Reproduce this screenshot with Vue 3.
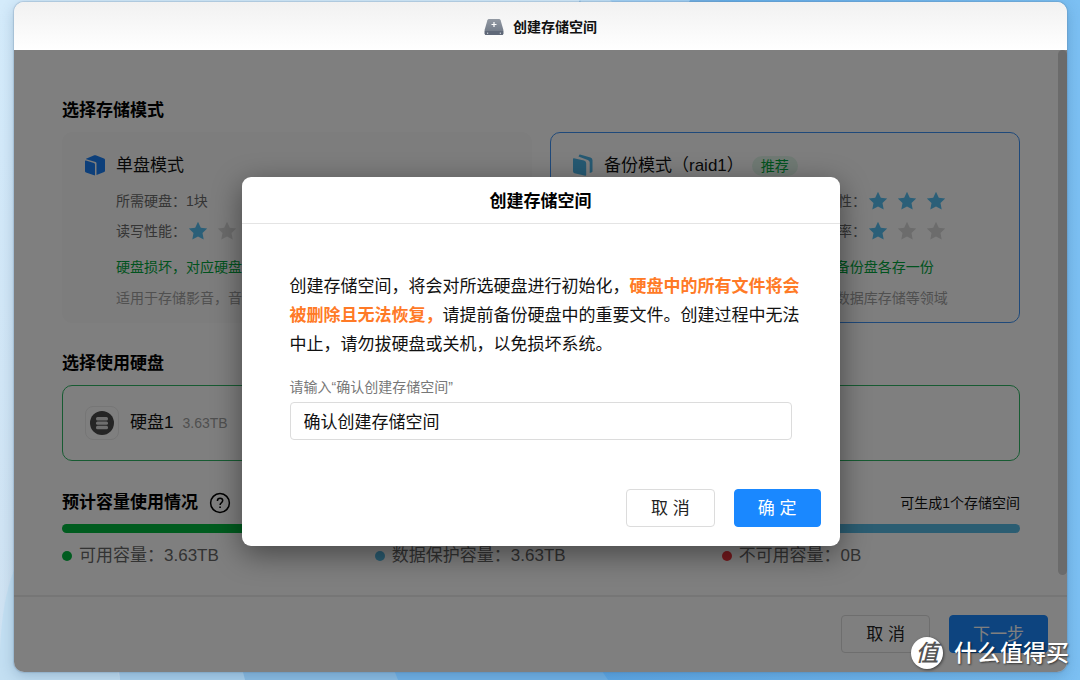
<script setup>
import { ref } from 'vue'

const confirmText = ref('确认创建存储空间')

const modes = [
  {
    id: 'single',
    name: '单盘模式',
    icon: 'box',
    recommended: false,
    selected: false,
    disks: '1块',
    speed: 1,
    safety: 1,
    usage: 3,
    note: '硬盘损坏，对应硬盘数据丢失',
    scope: '适用于存储影音，音乐等文件',
  },
  {
    id: 'backup',
    name: '备份模式（raid1）',
    icon: 'pages',
    recommended: true,
    selected: true,
    disks: '2块',
    speed: 2,
    safety: 3,
    usage: 1,
    note: '硬盘损坏时数据仍可恢复，主盘与1块备份盘各存一份',
    scope: '适用于重要文件备份, 办公文档资料及数据库存储等领域',
  },
]

const legend = [
  { label: '可用容量', value: '3.63TB', tone: 'green' },
  { label: '数据保护容量', value: '3.63TB', tone: 'blue' },
  { label: '不可用容量', value: '0B', tone: 'red' },
]

const starPath =
  'M10 .8l2.8 6 6.4.8-4.7 4.5 1.2 6.5L10 15.4l-5.7 3.2 1.2-6.5L.8 7.6l6.4-.8z'
</script>

<template>
  <div class="desktop">
    <svg class="wallpaper" viewBox="0 0 1080 680" preserveAspectRatio="none" aria-hidden="true">
      <defs>
        <linearGradient id="sky" x1="0" y1="0" x2="0" y2="1">
          <stop offset="0" stop-color="#d4ebfb" />
          <stop offset="1" stop-color="#cfe2f2" />
        </linearGradient>
        <linearGradient id="deep" x1="0" y1="0" x2="1" y2="0">
          <stop offset="0" stop-color="#5ea8e6" />
          <stop offset="1" stop-color="#7cc0f3" />
        </linearGradient>
      </defs>
      <rect width="1080" height="680" fill="url(#sky)" />
      <path d="M14 570Q2 600 0 650V680H120L60 500z" fill="#c3dff2" />
      <path d="M118 660L120 680H400V600z" fill="#aad0ec" />
      <path d="M580 0H1080V680H245L240 660z" fill="#8cbde3" />
      <path d="M580 0H620L590 30z" fill="#c3e2f8" />
      <path d="M610 0H700L640 30z" fill="#a4d2f6" />
      <path d="M690 0H1080V680H398L390 660z" fill="#72b2e6" />
      <path d="M720 0H1080V680H608L598 665z" fill="url(#deep)" />
    </svg>

    <main class="window">
      <header class="titlebar">
        <svg class="drive-icon" viewBox="0 0 20 18" aria-hidden="true">
          <defs>
            <linearGradient id="drive" x1="0" y1="0" x2="0" y2="1">
              <stop offset="0" stop-color="#9299a3" />
              <stop offset="1" stop-color="#6b7482" />
            </linearGradient>
          </defs>
          <path d="M5 1h10q1.200 0 1.600 1.200L19.400 12v3.500q0 1.500-1.500 1.500H2.100Q.6 17 .6 15.500V12L3.400 2.200Q3.800 1 5 1z" fill="url(#drive)" />
          <path d="M.8 13h18.400v2.500q0 1.500-1.500 1.500H2.300Q.8 17 .8 15.500z" fill="#5f6878" />
          <path d="M10 4v5M7.500 6.500h5" stroke="#fff" stroke-width="1.200" />
          <path d="M3 15.200h1.200M15.800 15.200H17" stroke="#e8ecf0" />
        </svg>
        <h1>创建存储空间</h1>
      </header>

      <div class="stage">
        <div class="content">
          <section>
            <h2>选择存储模式</h2>
            <div class="modes">
              <article v-for="m in modes" :key="m.id" class="mode" :class="{ selected: m.selected }">
                <svg v-if="m.icon === 'box'" class="mode-icon" viewBox="0 0 22 22" aria-hidden="true">
                  <path d="M2 4.800L10.300 1.300q.7-.3 1.400 0L20 4.600q1 .4 1 1.500v10.600q0 .9-.8 1.300L12.500 21V9.500q0-1-.9-1.400L2.200 5.200z" fill="#1a7ff5" />
                  <path d="M1 7.200q0-.9.9-.6l8 2.500q1.100.4 1.100 1.500v10.100q0 .9-.9.6L2 18.600q-1-.4-1-1.400z" fill="#1a7ff5" />
                </svg>
                <svg v-else class="mode-icon" viewBox="0 0 22 22" aria-hidden="true">
                  <path d="M1 5q0-1 .9-.8L12 6.500q2.200.5 2.200 2.700V21q0 1-.9.8L2.500 19.200Q1 18.800 1 17.300z" fill="#4db4e6" />
                  <path d="M6.500 2.600l.7-1.700q.2-.5.800-.3l10.500 2.900q2 .6 2 2.700v11q0 .7-.6 1l-2.200.8V8.600q0-2.200-2-2.700z" fill="#4db4e6" />
                </svg>

                <div class="mode-info">
                  <div class="mode-title">
                    <h3>{{ m.name }}</h3>
                    <span v-if="m.recommended" class="tag">推荐</span>
                  </div>
                  <dl class="facts">
                    <div>
                      <dt>所需硬盘：</dt>
                      <dd>{{ m.disks }}</dd>
                    </div>
                    <div>
                      <dt>安全性：</dt>
                      <dd class="stars">
                        <svg v-for="n in 3" :key="n" viewBox="0 0 20 20" :class="{ on: n <= m.safety }"><path :d="starPath" /></svg>
                      </dd>
                    </div>
                    <div>
                      <dt>读写性能：</dt>
                      <dd class="stars">
                        <svg v-for="n in 3" :key="n" viewBox="0 0 20 20" :class="{ on: n <= m.speed }"><path :d="starPath" /></svg>
                      </dd>
                    </div>
                    <div>
                      <dt>利用率：</dt>
                      <dd class="stars">
                        <svg v-for="n in 3" :key="n" viewBox="0 0 20 20" :class="{ on: n <= m.usage }"><path :d="starPath" /></svg>
                      </dd>
                    </div>
                  </dl>
                  <p class="note">{{ m.note }}</p>
                  <p class="scope">{{ m.scope }}</p>
                </div>
              </article>
            </div>
          </section>

          <section>
            <h2>选择使用硬盘</h2>
            <div class="disk">
              <span class="disk-icon">
                <svg viewBox="0 0 24 24" aria-hidden="true">
                  <circle cx="12" cy="12" r="12" fill="#4a4a4a" />
                  <g fill="#dcdcdc">
                    <rect x="6" y="6" width="12" height="3.400" rx="1.500" />
                    <rect x="6" y="10.400" width="12" height="3.400" rx="1.500" />
                    <rect x="6" y="14.800" width="12" height="3.400" rx="1.500" />
                  </g>
                </svg>
              </span>
              <span class="disk-name">硬盘1</span>
              <span class="disk-size">3.63TB</span>
            </div>
          </section>

          <section>
            <div class="usage-head">
              <h2>预计容量使用情况</h2>
              <button class="help" type="button" aria-label="帮助">
                <svg viewBox="0 0 22 22" aria-hidden="true" fill="none" stroke="#000">
                  <circle cx="11" cy="11" r="9.400" stroke-width="1.500" />
                  <path d="M8.400 9q0-2.700 2.700-2.700 2.600 0 2.600 2.300 0 1.300-1.400 2.200-1.200.8-1.200 2.200" stroke-width="1.500" />
                  <path d="M11.100 14.400v1.600" stroke-width="1.600" />
                </svg>
              </button>
              <span class="count">可生成1个存储空间</span>
            </div>
            <div class="meter"><span class="green"></span><span class="blue"></span></div>
            <ul class="legend">
              <li v-for="l in legend" :key="l.label">
                <i :class="l.tone"></i>{{ l.label }}：{{ l.value }}
              </li>
            </ul>
          </section>
          <span class="scroll-thumb"></span>
        </div>

        <footer class="actions page-actions">
          <button class="btn" type="button">取 消</button>
          <button class="btn primary" type="button">下一步</button>
        </footer>

        <div class="mask">
          <form class="dialog" role="dialog" aria-labelledby="dialog-title" @submit.prevent>
            <h2 id="dialog-title">创建存储空间</h2>
            <div class="dialog-body">
              <p>创建存储空间，将会对所选硬盘进行初始化，<strong>硬盘中的所有文件将会被删除且无法恢复，</strong>请提前备份硬盘中的重要文件。创建过程中无法中止，请勿拔硬盘或关机，以免损坏系统。</p>
              <label for="confirm">请输入“确认创建存储空间”</label>
              <input id="confirm" v-model="confirmText" type="text" autocomplete="off" />
            </div>
            <div class="actions">
              <button class="btn" type="button">取 消</button>
              <button class="btn primary" type="submit">确 定</button>
            </div>
          </form>
        </div>
      </div>
    </main>

    <div class="watermark">
      <span class="seal">值</span>
      <span>什么值得买</span>
    </div>
  </div>
</template>

<style>
body {
  margin: 0;
}
</style>

<style scoped>
* {
  box-sizing: border-box;
}

.desktop {
  position: relative;
  display: flex;
  min-height: 100vh;
  padding: 2px 13px 8px 14px;
  overflow: hidden;
  font-family: "Liberation Sans", "Noto Sans CJK SC", sans-serif;
  font-size: 17px;
  line-height: 24px;
  color: #111;
}

.wallpaper {
  position: absolute;
  inset: 0;
  width: 100%;
  height: 100%;
}

h1,
h2,
h3,
p,
dl,
dd,
ul {
  margin: 0;
  padding: 0;
}

.window {
  position: relative;
  flex: 1;
  display: flex;
  flex-direction: column;
  border-radius: 10px;
  overflow: hidden;
  background: #fff;
  box-shadow: 0 0 1px 1px rgba(90, 120, 150, 0.25), 0 4px 14px rgba(30, 70, 110, 0.25);
}

.titlebar {
  display: flex;
  align-items: center;
  justify-content: center;
  gap: 9px;
  height: 48px;
  padding-top: 2px;
  background: linear-gradient(#f1f1f1, #fff);
}

.titlebar h1 {
  font-size: 14px;
  line-height: 20px;
}

.drive-icon {
  width: 20px;
  height: 18px;
}

.stage {
  position: relative;
  flex: 1;
  display: flex;
  flex-direction: column;
}

.content {
  position: relative;
  flex: 1;
  padding: 49px 47px 24px 48px;
}

.scroll-thumb {
  position: absolute;
  top: 0;
  right: 0;
  bottom: 20px;
  width: 9px;
  border-radius: 5px;
  background: #d6d6d6;
}

h2 {
  font-size: 17px;
  line-height: 24px;
  color: #000;
}

.modes {
  display: grid;
  grid-template-columns: 1fr 1fr;
  gap: 18px;
  margin: 9px 0 29px;
}

.mode {
  display: flex;
  gap: 10px;
  min-width: 0;
  padding: 21px 20px 14px 21px;
  border: 1px solid #fafafa;
  border-radius: 10px;
  background: #fafafa;
}

.mode.selected {
  border-color: #3f93f5;
  background: #fdfdfd;
}

.mode-icon {
  flex: none;
  width: 22px;
  height: 22px;
}

.mode-info {
  min-width: 0;
  white-space: nowrap;
}

.mode-title {
  display: flex;
  align-items: center;
  gap: 8px;
}

h3 {
  font-size: 17px;
  font-weight: 400;
}

.tag {
  padding: 0 9px;
  border-radius: 10px;
  background: #e0f5e8;
  color: #00a63c;
  font-size: 14px;
  line-height: 20px;
}

.facts {
  display: grid;
  grid-template-columns: 206px 1fr;
  row-gap: 10px;
  margin-top: 13px;
  font-size: 14px;
  line-height: 20px;
  color: #6a6a6a;
}

.facts > div {
  display: flex;
  align-items: center;
}

.stars {
  display: flex;
  gap: 9px;
  margin-left: 2px;
}

.stars svg {
  width: 20px;
  height: 20px;
  fill: #d8d8d8;
}

.stars svg.on {
  fill: #56bff0;
}

.note,
.scope {
  font-size: 14px;
  line-height: 20px;
}

.note {
  margin-top: 16px;
  color: #00a63c;
}

.scope {
  margin-top: 11px;
  color: #a0a0a0;
}

.disk {
  display: flex;
  align-items: center;
  margin: 9px 0 30px;
  padding: 20px 22px;
  border: 1px solid #2fb765;
  border-radius: 10px;
}

.disk-icon {
  display: flex;
  align-items: center;
  justify-content: center;
  width: 34px;
  height: 34px;
  border: 1px solid #ececec;
  border-radius: 8px;
}

.disk-icon svg {
  width: 24px;
  height: 24px;
}

.disk-name {
  margin: 0 9px 0 11px;
}

.disk-size {
  font-size: 14px;
  color: #a0a0a0;
}

.usage-head {
  display: flex;
  align-items: center;
  gap: 11px;
}

.help {
  width: 22px;
  height: 22px;
  padding: 0;
  border: 0;
  background: none;
}

.help svg {
  display: block;
}

.count {
  margin-left: auto;
  font-size: 14px;
}

.meter {
  display: flex;
  height: 9px;
  margin: 9px 0 11px;
  border-radius: 5px;
  overflow: hidden;
}

.meter span {
  flex: 1;
}

.green {
  background: #00b83f;
}

.blue {
  background: #56bae5;
}

.red {
  background: #f0343c;
}

.legend {
  display: flex;
  gap: 156px;
  list-style: none;
  white-space: nowrap;
  color: #666;
}

.legend li {
  display: flex;
  align-items: center;
}

.legend i {
  width: 10px;
  height: 10px;
  margin-right: 7px;
  border-radius: 50%;
}

.actions {
  display: flex;
  justify-content: flex-end;
  gap: 19px;
  padding: 0 19px 19px;
}

.page-actions {
  padding-top: 18px;
  border-top: 2px solid #ececec;
}

.btn {
  height: 38px;
  padding: 2px 24px 0;
  border: 1px solid #dcdcdc;
  border-radius: 4px;
  background: #fff;
  color: #222;
  font: inherit;
}

.btn.primary {
  padding: 2px 23px 0;
  border-color: #1a88ff;
  background: #1a88ff;
  color: #fff;
}

.mask {
  position: absolute;
  inset: 0;
  display: flex;
  align-items: center;
  justify-content: center;
  background: rgba(0, 0, 0, 0.5);
}

.dialog {
  width: 598px;
  max-width: 92%;
  border-radius: 9px;
  background: #fff;
  box-shadow: 0 8px 30px rgba(0, 0, 0, 0.45);
}

.dialog h2 {
  padding: 13px 0 9px;
  border-bottom: 1px solid #e4e4e4;
  text-align: center;
}

.dialog-body {
  padding: 48px 48px 49px;
}

.dialog-body p {
  margin-right: -10px;
  line-height: 29px;
}

.dialog-body strong {
  color: #ff7a26;
}

.dialog-body label {
  display: block;
  margin: 18px 0 5px;
  font-size: 14px;
  line-height: 20px;
  color: #777;
}

.dialog-body input {
  display: block;
  width: 100%;
  height: 38px;
  padding: 0 13px;
  border: 1px solid #dcdcdc;
  border-radius: 4px;
  outline: none;
  color: #111;
  font: inherit;
}

.watermark {
  position: absolute;
  right: 11px;
  bottom: 11px;
  display: flex;
  align-items: center;
  gap: 11px;
  color: #fff;
  font-size: 23px;
  line-height: 32px;
  font-weight: 500;
  text-shadow: 1px 1px 2px rgba(0, 0, 0, 0.6);
}

.seal {
  width: 32px;
  height: 32px;
  border-radius: 50%;
  background: #fff;
  box-shadow: 1px 1px 3px rgba(0, 0, 0, 0.5);
  color: #555;
  text-align: center;
  text-shadow: none;
  font-style: italic;
}
</style>
